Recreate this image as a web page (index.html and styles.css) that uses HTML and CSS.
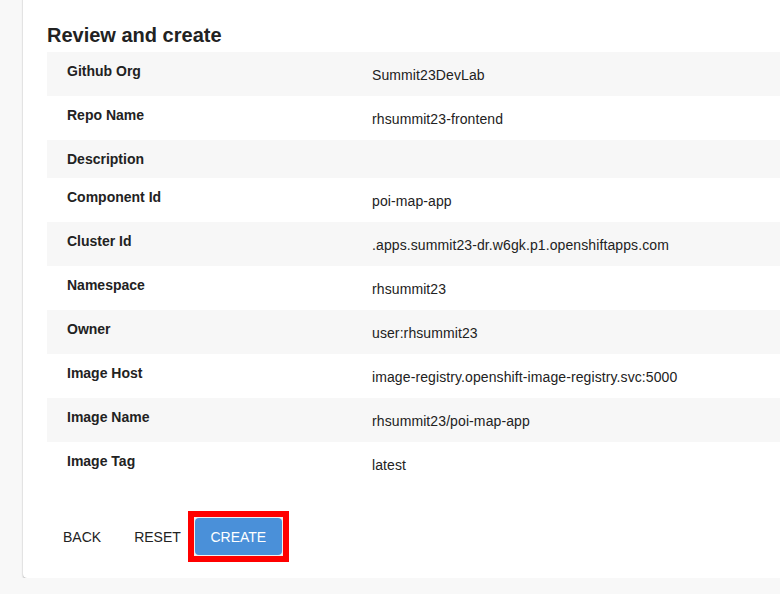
FILE: index.html
```html
<!DOCTYPE html>
<html lang="en">
<head>
<meta charset="utf-8">
<title>Review and create</title>
<link rel="stylesheet" href="styles.css">
</head>
<body>
<main class="card">
  <h2 class="title">Review and create</h2>
  <div class="table">
    <div class="row alt"><div class="label">Github Org</div><div class="value">Summit23DevLab</div></div>
    <div class="row"><div class="label">Repo Name</div><div class="value">rhsummit23-frontend</div></div>
    <div class="row alt"><div class="label">Description</div><div class="value"></div></div>
    <div class="row"><div class="label">Component Id</div><div class="value">poi-map-app</div></div>
    <div class="row alt"><div class="label">Cluster Id</div><div class="value">.apps.summit23-dr.w6gk.p1.openshiftapps.com</div></div>
    <div class="row"><div class="label">Namespace</div><div class="value">rhsummit23</div></div>
    <div class="row alt"><div class="label">Owner</div><div class="value">user:rhsummit23</div></div>
    <div class="row"><div class="label">Image Host</div><div class="value">image-registry.openshift-image-registry.svc:5000</div></div>
    <div class="row alt"><div class="label">Image Name</div><div class="value">rhsummit23/poi-map-app</div></div>
    <div class="row"><div class="label">Image Tag</div><div class="value">latest</div></div>
  </div>
  <div class="actions">
    <button class="btn text back">BACK</button>
    <button class="btn text reset">RESET</button>
    <div class="highlight"><button class="btn primary">CREATE</button></div>
  </div>
</main>
</body>
</html>
```
FILE: styles.css
```css
html, body {
  margin: 0;
  padding: 0;
  overflow: hidden;
  background: #f8f8f8;
  font-family: "Liberation Sans", Arial, sans-serif;
  color: #222;
}
.card {
  margin: -6px 0 0 23px;
  width: 820px;
  height: 584px;
  box-sizing: border-box;
  padding: 29px 0 0 24px;
  background: #fff;
  border-radius: 4px;
  box-shadow: 0 1px 2px rgba(0,0,0,0.28), 0 0 1px rgba(0,0,0,0.14);
}
.title {
  margin: 0 0 5px;
  font-size: 20px;
  line-height: 24px;
  font-weight: 700;
  color: #222;
}
.table {
  display: flex;
  flex-direction: column;
}
.row {
  display: flex;
  align-items: flex-start;
}
.row.alt { background: #f7f7f7; }
.label {
  width: 305px;
  padding: 12px 0 12px 20px;
  font-size: 14px;
  line-height: 14px;
  font-weight: 700;
  color: #222;
}
.value {
  padding: 15px 0 13px;
  font-size: 14px;
  line-height: 16px;
  letter-spacing: 0.1px;
  color: #222;
}
.actions {
  display: flex;
  align-items: center;
  margin-top: 25px;
}
.btn {
  font-family: "Liberation Sans", Arial, sans-serif;
  font-size: 14px;
  border: none;
  background: none;
  cursor: pointer;
}
.btn.text {
  color: #222;
  padding: 0;
  height: 36px;
}
.back { margin-left: 16px; }
.reset { margin-left: 33px; }
.highlight {
  margin-left: 7px;
  border: 6px solid #ff0000;
  padding: 1px;
  background: #f0f0f0;
  display: flex;
}
.btn.primary {
  width: 87px;
  height: 37px;
  border-radius: 4px;
  background: #4a90d9;
  color: #fff;
  padding: 0;
}
```
